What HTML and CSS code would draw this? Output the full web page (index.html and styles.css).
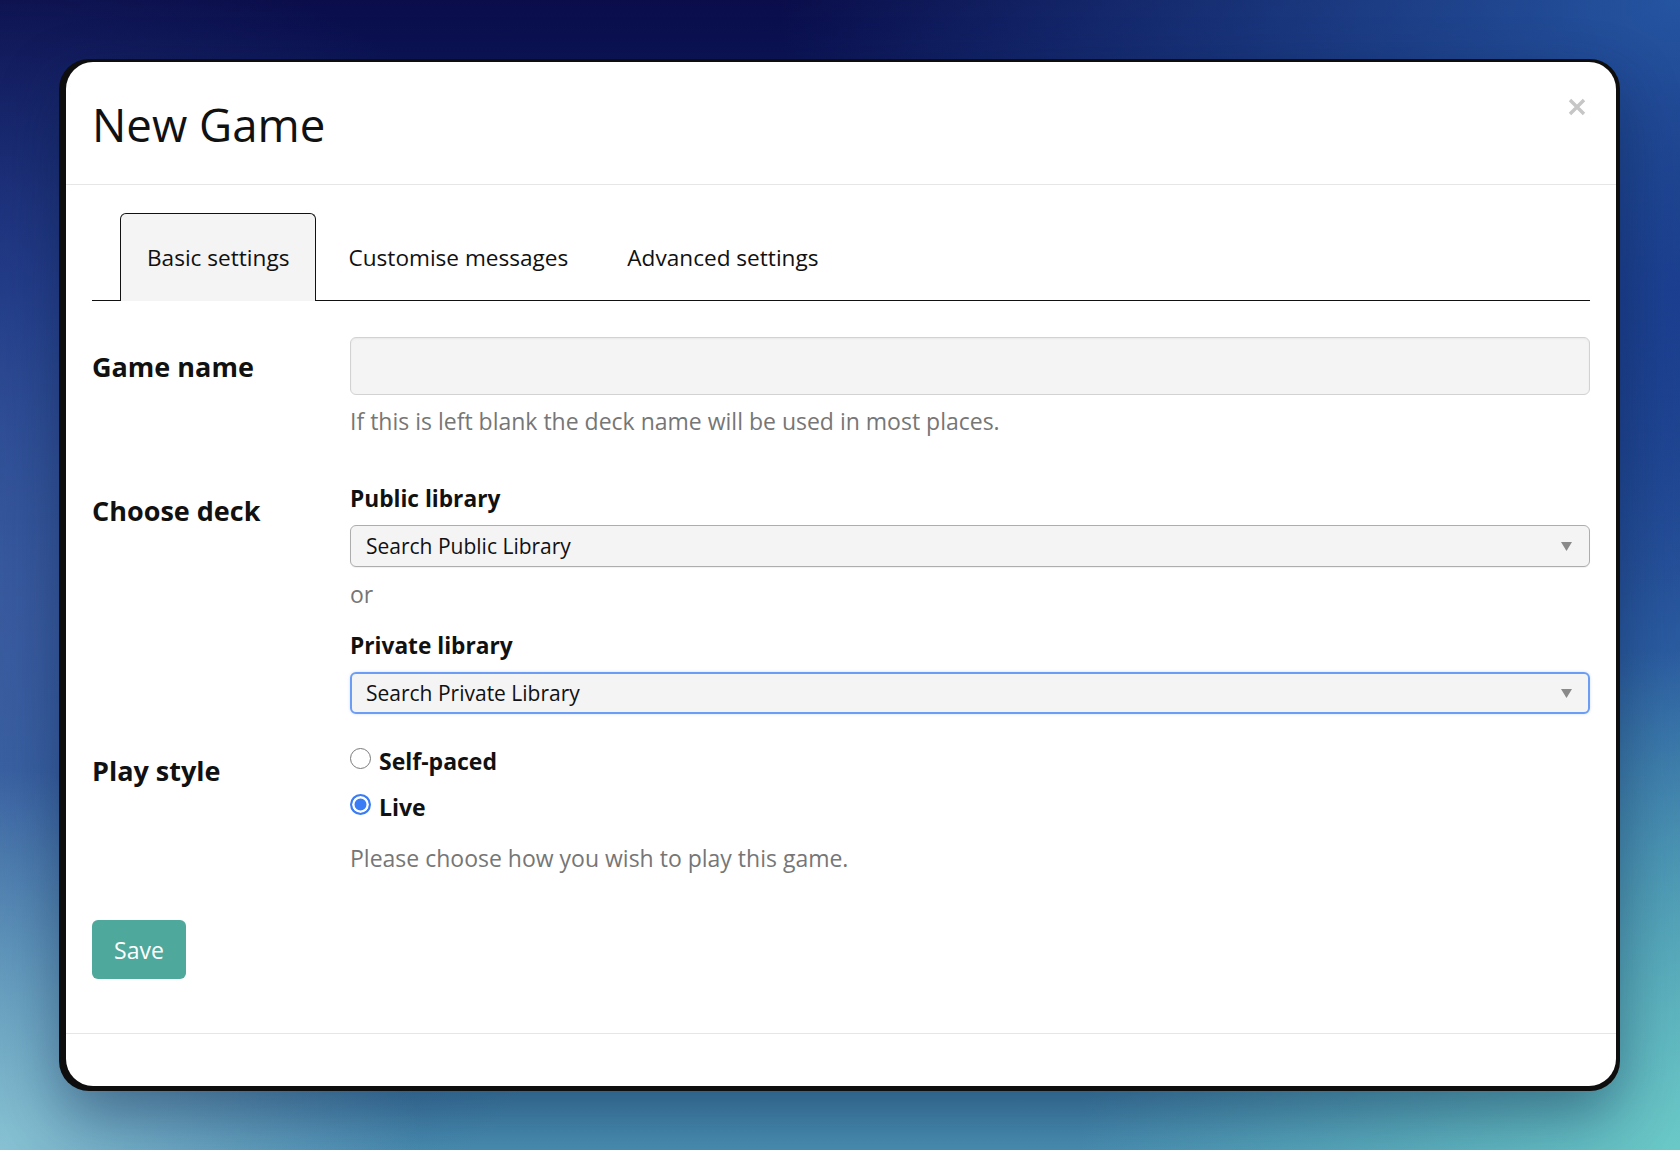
FILE: index.html
```html
<!DOCTYPE html>
<html lang="en">
<head>
<meta charset="utf-8">
<title>New Game</title>
<link rel="stylesheet" href="styles.css">
</head>
<body>
<div class="stage">
  <div class="frame">
    <div class="modal">
      <div class="modal-header">
        <h1 class="modal-title">New Game</h1>
        <button class="close" aria-label="Close">
          <svg width="18" height="18" viewBox="0 0 18 18"><path d="M2 2 L16 16 M16 2 L2 16" stroke="#c6c6c6" stroke-width="3.4" fill="none"/></svg>
        </button>
      </div>
      <div class="modal-body">
        <ul class="tabs">
          <li class="tab active">Basic settings</li>
          <li class="tab">Customise messages</li>
          <li class="tab">Advanced settings</li>
        </ul>
        <div class="form">
          <div class="row row-name">
            <div class="row-label label-name">Game name</div>
            <div class="row-field">
              <div class="text-input"></div>
              <p class="help help-name">If this is left blank the deck name will be used in most places.</p>
            </div>
          </div>
          <div class="row row-deck">
            <div class="row-label label-deck">Choose deck</div>
            <div class="row-field">
              <div class="sub-label">Public library</div>
              <div class="select select-public">
                <span class="select-text">Search Public Library</span>
                <svg class="caret" width="11" height="9" viewBox="0 0 11 9"><path d="M0 0 H11 L5.5 9 Z" fill="#8a8a8a"/></svg>
              </div>
              <p class="help help-or">or</p>
              <div class="sub-label sub-label-private">Private library</div>
              <div class="select select-private">
                <span class="select-text">Search Private Library</span>
                <svg class="caret" width="11" height="9" viewBox="0 0 11 9"><path d="M0 0 H11 L5.5 9 Z" fill="#8a8a8a"/></svg>
              </div>
            </div>
          </div>
          <div class="row row-style">
            <div class="row-label label-style">Play style</div>
            <div class="row-field">
              <div class="radio-list">
                <div class="radio-item"><span class="radio"></span><span class="radio-text">Self-paced</span></div>
                <div class="radio-item"><span class="radio checked"></span><span class="radio-text">Live</span></div>
              </div>
              <p class="help help-style">Please choose how you wish to play this game.</p>
            </div>
          </div>
        </div>
        <button class="save">Save</button>
      </div>
      <div class="modal-footer"></div>
    </div>
  </div>
</div>
</body>
</html>
```

FILE: styles.css
```css
* { box-sizing: border-box; }

html, body {
  margin: 0;
  padding: 0;
}

body {
  width: 1680px;
  height: 1150px;
  overflow: hidden;
  font-family: "Open Sans", "Noto Sans", sans-serif;
  color: #111;
  background:
    radial-gradient(ellipse 420px 380px at 0% 100%, rgba(138, 196, 212, 0.95) 0%, rgba(138, 196, 212, 0) 100%),
    radial-gradient(ellipse 600px 500px at 100% 100%, rgba(108, 204, 200, 0.95) 0%, rgba(108, 204, 200, 0) 100%),
    radial-gradient(ellipse 900px 600px at 100% 0%, rgba(40, 92, 170, 0.9) 0%, rgba(40, 92, 170, 0) 100%),
    radial-gradient(ellipse 700px 700px at 0% 55%, rgba(62, 92, 160, 0.8) 0%, rgba(62, 92, 160, 0) 100%),
    linear-gradient(to bottom, #0a0d4a 0%, #12287a 25%, #2a5aa0 55%, #3d7faa 85%, #4a8fb2 100%);
}

.stage {
  padding: 59px 0 0 59px;
}

.frame {
  width: 1561px;
  height: 1032px;
  background: #0e0e0f;
  border-radius: 30px;
  padding: 3px 4px 5px 7px;
  box-shadow: 0 24px 60px rgba(10, 30, 70, 0.45);
}

.modal {
  width: 1550px;
  height: 1024px;
  background: #fff;
  border-radius: 27px;
  overflow: hidden;
  display: flex;
  flex-direction: column;
}

.modal-header {
  height: 123px;
  border-bottom: 1px solid #e6e6e6;
  display: flex;
  justify-content: space-between;
  align-items: flex-start;
  padding: 0 30px 0 26px;
}

.modal-title {
  margin: 35px 0 0 0;
  font-size: 45.6px;
  font-weight: 400;
  line-height: 55px;
  color: #111;
}

.close {
  margin-top: 36px;
  padding: 0;
  border: 0;
  background: none;
  width: 18px;
  height: 18px;
  display: flex;
}

.modal-body {
  height: 848px;
  padding: 28px 26px 0 26px;
}

.tabs {
  list-style: none;
  margin: 0;
  padding: 0 0 0 28px;
  display: flex;
  gap: 5px;
  border-bottom: 1px solid #111;
}

.tab {
  font-size: 22.6px;
  line-height: 32px;
  padding: 28px 26px 27px 26px;
  border: 1px solid transparent;
  border-bottom: 0;
  border-radius: 6px 6px 0 0;
  color: #111;
  margin-bottom: -1px;
}

.tab.active {
  background: #f4f4f4;
  border-color: #111;
}

.form {
  margin-top: 36px;
}

.row {
  display: grid;
  grid-template-columns: 258px 1fr;
}

.row-label {
  font-size: 27px;
  font-weight: 700;
  line-height: 36px;
  color: #111;
}

.label-name { padding-top: 12px; }
.label-deck { padding-top: 9px; }
.label-style { padding-top: 7px; }

.row-deck { margin-top: 48px; }
.row-style { margin-top: 32px; }

.text-input {
  height: 58px;
  background: #f4f4f4;
  border: 1px solid #d2d2d2;
  border-radius: 6px;
  box-shadow: inset 0 1px 2px rgba(0, 0, 0, 0.05);
}

.help {
  margin: 0;
  font-size: 23px;
  line-height: 30px;
  color: #767676;
}

.help-name { margin-top: 11px; }
.help-or { margin-top: 12px; }
.help-style { margin-top: 21px; }

.sub-label {
  font-size: 22.7px;
  font-weight: 700;
  line-height: 30px;
  color: #111;
}

.sub-label-private { margin-top: 22px; }

.select {
  margin-top: 11px;
  height: 42px;
  background: #f4f4f4;
  border: 1px solid #adadad;
  border-radius: 6px;
  display: flex;
  align-items: center;
  justify-content: space-between;
  padding: 0 17px 0 15px;
  box-shadow: 0 1px 1px rgba(0, 0, 0, 0.06);
}

.select-private {
  border: 2px solid #6c9df4;
  padding: 0 16px 0 14px;
  box-shadow: 0 0 3px rgba(90, 140, 240, 0.3);
}

.select-text {
  font-size: 21px;
  line-height: 38px;
  color: #111;
}

.caret {
  display: block;
}

.radio-list {
  display: flex;
  flex-direction: column;
  gap: 16px;
}

.radio-item {
  display: flex;
  align-items: flex-start;
  gap: 8px;
}

.radio {
  width: 21px;
  height: 21px;
  margin-top: 2px;
  border-radius: 50%;
  border: 1.5px solid #7a7a7a;
  background: #fff;
  flex: none;
}

.radio.checked {
  border: 2px solid #3a7cf4;
  background: #3a7cf4;
  box-shadow: inset 0 0 0 2.5px #fff;
}

.radio-text {
  font-size: 23px;
  font-weight: 700;
  line-height: 30px;
  color: #111;
}

.save {
  margin-top: 47px;
  width: 94px;
  height: 59px;
  border: 0;
  border-radius: 6px;
  background: #4ea89c;
  color: #fff;
  font-family: "Open Sans", "Noto Sans", sans-serif;
  font-size: 23px;
  padding: 0;
  display: block;
}

.modal-footer {
  border-top: 1px solid #e6e6e6;
  height: 53px;
}
```
